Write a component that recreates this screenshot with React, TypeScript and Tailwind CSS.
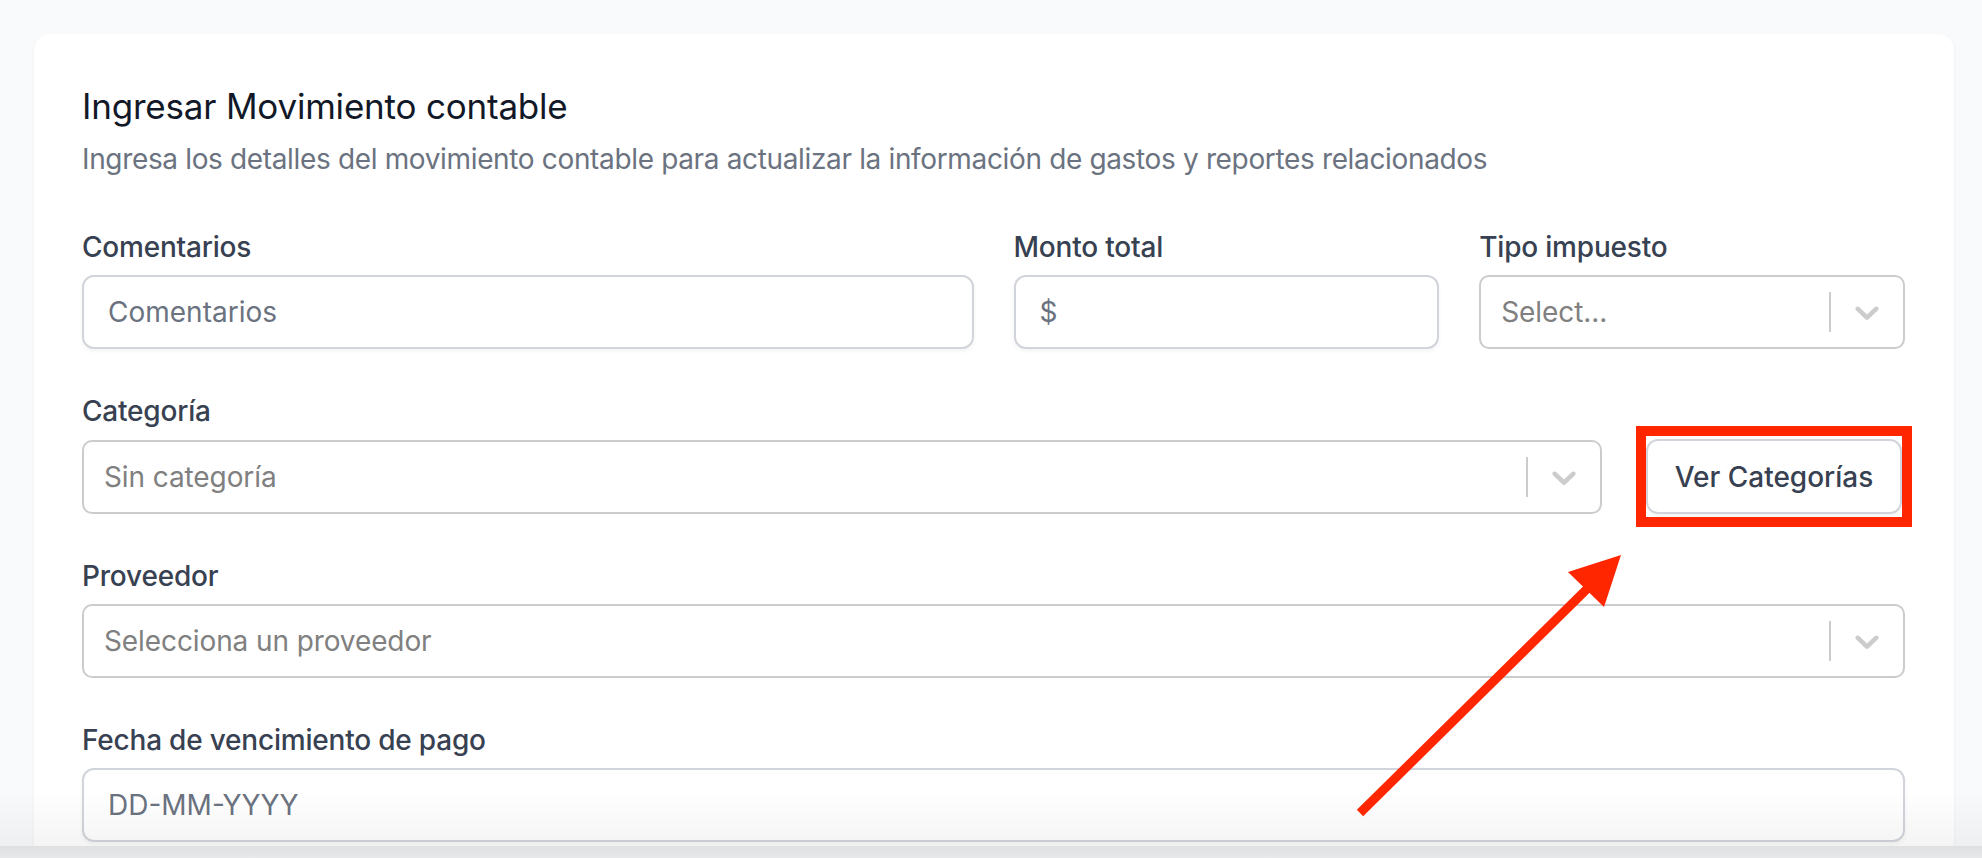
import type { ReactNode } from "react";

const inputCls =
  "h-[74px] w-full rounded-[12px] border-2 border-[#d1d5db] bg-white px-[24px] text-[28px] text-gray-900 placeholder:text-[#6b7280] shadow-[0_2px_4px_rgba(0,0,0,0.05)] outline-none";

function Field({ label, children }: { label: string; children: ReactNode }) {
  return (
    <div className="flex flex-col">
      <label className="mb-[8px] text-[28px] leading-[40px] font-medium tracking-[-0.2px] text-[#374151]">
        {label}
      </label>
      {children}
    </div>
  );
}

// react-select style control, default look
function SelectBox({ placeholder }: { placeholder: string }) {
  return (
    <div className="flex h-[74px] w-full items-center rounded-[10px] border-2 border-[#cccccc] bg-white">
      <div className="flex-1 pl-[20px] text-[28px] tracking-[-0.1px] text-[#808080]">{placeholder}</div>
      <span className="my-[15px] w-[2px] self-stretch bg-[#cccccc]" />
      <div className="px-[16px]">
        <svg width="40" height="40" viewBox="0 0 20 20" fill="#cccccc">
          <path d="M4.516 7.548c0.436-0.446 1.043-0.481 1.576 0l3.908 3.747 3.908-3.747c0.533-0.481 1.141-0.446 1.574 0 0.436 0.445 0.408 1.197 0 1.615-0.406 0.418-4.695 4.502-4.695 4.502-0.217 0.223-0.502 0.335-0.787 0.335s-0.57-0.112-0.789-0.335c0 0-4.287-4.084-4.695-4.502s-0.436-1.17 0-1.615z" />
        </svg>
      </div>
    </div>
  );
}

export default function App() {
  return (
    <div className="relative h-[858px] w-full overflow-hidden bg-[#f9fafb] font-[Inter,sans-serif]">
      <div className="h-[846px] overflow-hidden pt-[34px] pr-[28px] pl-[34px]">
        <section className="rounded-[16px] bg-white p-[48px] pr-[49px] shadow-[0_1px_3px_rgba(0,0,0,0.06)]">
          <h1 className="text-[35px] leading-[48px] font-normal tracking-[-0.2px] text-[#111827]">
            Ingresar Movimiento contable
          </h1>
          <p className="mt-[9px] text-[28px] leading-[40px] tracking-[-0.35px] text-[#6b7280]">
            Ingresa los detalles del movimiento contable para actualizar la información de gastos y reportes relacionados
          </p>

          <form className="mt-[48px] flex flex-col gap-[42px]">
            <div className="grid grid-cols-4 gap-x-[40px]">
              <div className="col-span-2">
                <Field label="Comentarios">
                  <input className={inputCls} placeholder="Comentarios" />
                </Field>
              </div>
              <Field label="Monto total">
                <input className={inputCls} placeholder="$" />
              </Field>
              <Field label="Tipo impuesto">
                <SelectBox placeholder="Select..." />
              </Field>
            </div>

            <Field label="Categoría">
              <div className="flex items-center gap-[44px]">
                <div className="flex-1">
                  <SelectBox placeholder="Sin categoría" />
                </div>
                <button
                  type="button"
                  className="mr-[3px] h-[75px] w-[256px] rounded-[12px] border-2 border-[#d1d5db] bg-white text-[28px] font-medium text-[#374151] shadow-[0_2px_4px_rgba(0,0,0,0.05)]"
                >
                  Ver Categorías
                </button>
              </div>
            </Field>

            <Field label="Proveedor">
              <SelectBox placeholder="Selecciona un proveedor" />
            </Field>

            <Field label="Fecha de vencimiento de pago">
              <input className={`${inputCls} px-[22px]`} placeholder="DD-MM-YYYY" />
            </Field>
          </form>
        </section>
      </div>

      {/* bottom window edge */}
      <div className="h-[12px] bg-gradient-to-b from-[#dfe0e2] to-[#e8e9eb]" />

      {/* soft shade above the window edge */}
      <div className="pointer-events-none absolute top-[790px] right-0 left-0 h-[56px] bg-gradient-to-b from-transparent to-[rgba(0,0,0,0.045)]" />

      {/* annotation: highlight box + arrow */}
      <svg
        className="pointer-events-none absolute inset-0"
        width="1982"
        height="858"
        viewBox="0 0 1982 858"
      >
        <rect x="1641" y="431" width="266" height="91" fill="none" stroke="#ff2600" strokeWidth="10" />
        <line x1="1360" y1="813" x2="1592" y2="584" stroke="#ff2600" strokeWidth="9" />
        <polygon points="1621,555 1568,572 1604,607" fill="#ff2600" />
      </svg>
    </div>
  );
}
